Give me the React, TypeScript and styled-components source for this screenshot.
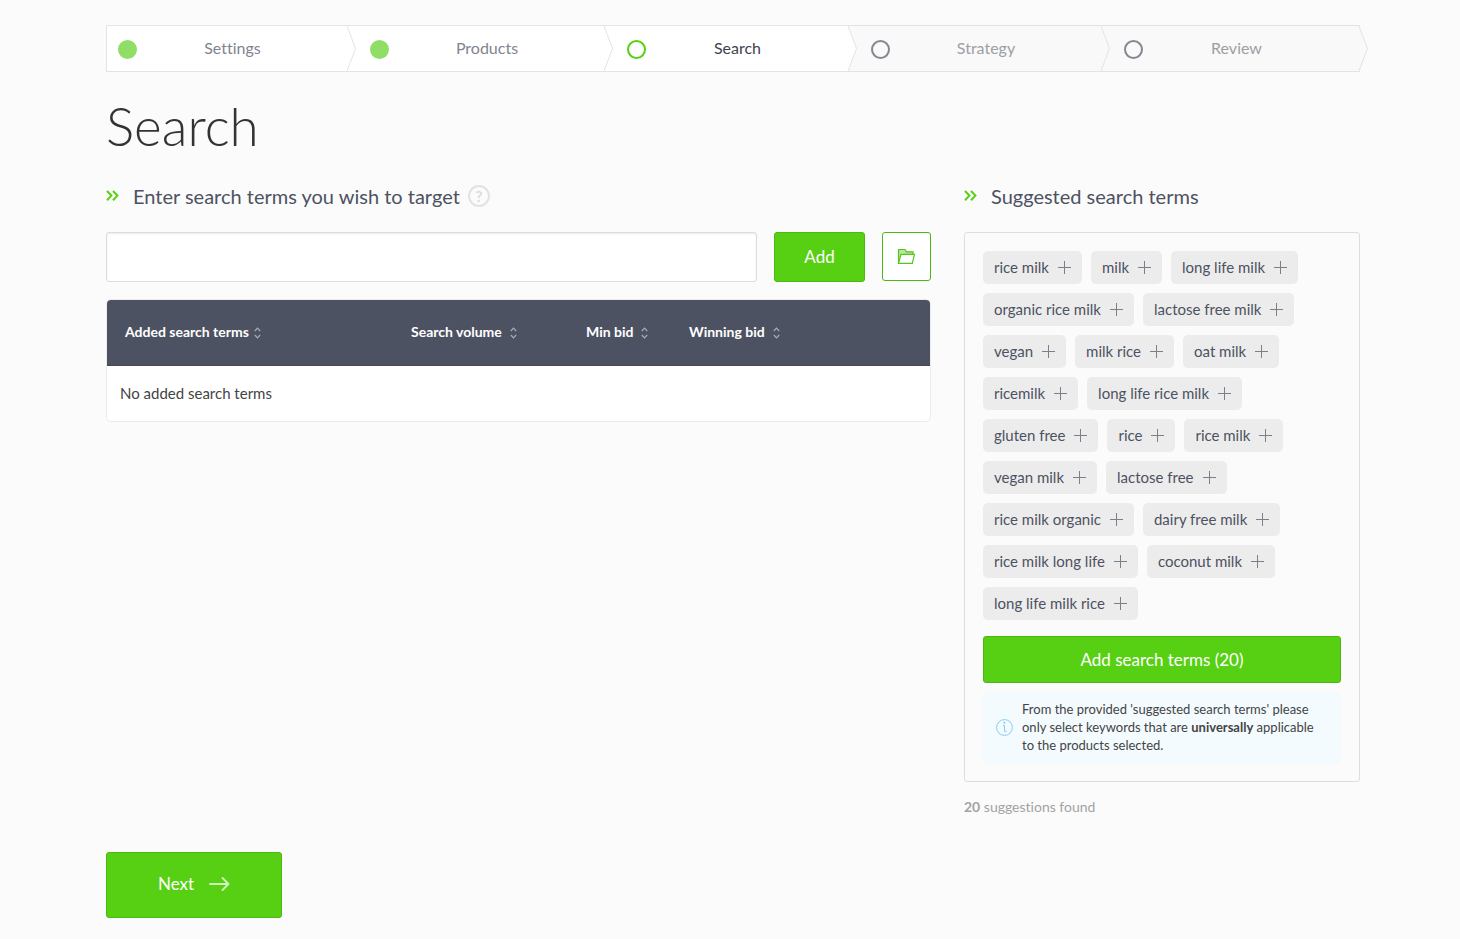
import React from "react";
import styled, { createGlobalStyle } from "styled-components";

const GlobalStyle = createGlobalStyle`
  *, *::before, *::after { box-sizing: border-box; }
  body {
    margin: 0;
    background: #fbfbfb;
    color: #333;
    font-family: Lato, "Liberation Sans", sans-serif;
    font-size: 16px;
    font-variant-ligatures: none;
  }
  button, input { font-family: inherit; font-variant-ligatures: none; }
`;

const Page = styled.main`
  padding: 25px 100px 21px 106px;
`;

/* ---- progress bar ---- */

type StepState = "done" | "current" | "todo";

const stepBackground = (s: StepState) => (s === "todo" ? "#f9f9f9" : "#fff");
const stepColor: Record<StepState, string> = {
  done: "#81848f",
  current: "#3f4350",
  todo: "#9d9fa3",
};
const markColor: Record<StepState, string> = {
  done: "#8fde66",
  current: "#57d013",
  todo: "#858793",
};

const Steps = styled.ol`
  display: grid;
  grid-template-columns: 241fr 257fr 244fr 253fr 258fr;
  margin: 0;
  padding: 0;
  list-style: none;
  border: 1px solid #e3e3e3;
  border-right: 0;
`;

const Step = styled.li<{ $state: StepState }>`
  position: relative;
  display: flex;
  align-items: center;
  height: 45px;
  padding: 0 20px 0 22px;
  background: ${(p) => stepBackground(p.$state)};
  color: ${(p) => stepColor[p.$state]};

  &:first-child { padding-left: 11px; }
  &:last-child { padding-right: 30px; }
`;

const StepMark = styled.span<{ $state: StepState }>`
  flex: none;
  width: 19px;
  height: 19px;
  margin-top: 2px;
  border: 2px solid ${(p) => markColor[p.$state]};
  border-radius: 50%;
  background: ${(p) => (p.$state === "done" ? markColor.done : "transparent")};
`;

const StepLabel = styled.span`
  flex: 1;
  padding-bottom: 2px;
  text-align: center;
  font-size: 16px;
  line-height: 20px;
`;

const StepTip = styled.svg`
  position: absolute;
  z-index: 1;
  top: 0;
  right: -9px;
  width: 10px;
  height: 45px;
`;

/* ---- headings ---- */

const Title = styled.h1`
  margin: 24px 0 28px;
  font-size: 53px;
  font-weight: 300;
  line-height: 60px;
  color: #333;
`;

const SectionHead = styled.div`
  display: flex;
  align-items: center;
  height: 24px;
  margin-bottom: 24px;
`;

const SectionTitle = styled.h2`
  margin: 0 8px 0 14px;
  font-size: 20px;
  font-weight: 400;
  line-height: 24px;
  color: #4d5262;
`;

const HelpButton = styled.button`
  width: 22px;
  height: 22px;
  padding: 0;
  border: 2px solid #e2e2e2;
  border-radius: 50%;
  background: transparent;
  color: #dcdcdc;
  font-size: 15px;
  font-weight: 700;
  line-height: 18px;
`;

const Columns = styled.div`
  display: grid;
  grid-template-columns: minmax(0, 1fr) 396px;
  column-gap: 33px;
  align-items: start;
`;

/* ---- buttons and inputs ---- */

const GreenButton = styled.button`
  display: flex;
  align-items: center;
  justify-content: center;
  padding: 0;
  border: 1px solid #4cb911;
  border-radius: 3px;
  background: #57d013;
  color: #fff;
  font-size: 17px;
  line-height: 24px;
`;

const AddButton = styled(GreenButton)`
  width: 91px;
  height: 50px;
`;

const AddAllButton = styled(GreenButton)`
  width: 100%;
  height: 47px;
`;

const NextButton = styled(GreenButton)`
  gap: 15px;
  width: 176px;
  height: 66px;
  margin-top: 36px;
  padding-bottom: 2px;
`;

const FolderButton = styled.button`
  display: flex;
  align-items: center;
  justify-content: center;
  width: 49px;
  height: 49px;
  padding: 0;
  border: 1px solid #4cb911;
  border-radius: 3px;
  background: #fff;
`;

const EntryForm = styled.form`
  display: flex;
  gap: 17px;
`;

const TermInput = styled.input`
  flex: 1;
  min-width: 0;
  height: 50px;
  padding: 0 14px;
  border: 1px solid #dcdcdc;
  border-radius: 3px;
  background: #fff;
  box-shadow: inset 0 1px 2px rgba(0, 0, 0, 0.08);
  font-size: 16px;
`;

/* ---- table ---- */

const TableFrame = styled.div`
  margin-top: 17px;
  border: 1px solid #ebebeb;
  border-radius: 5px;
  background: #fff;
  overflow: hidden;
`;

const TermTable = styled.table`
  width: 100%;
  table-layout: fixed;
  border-collapse: collapse;
`;

const HeadCell = styled.th<{ $width?: number }>`
  width: ${(p) => (p.$width ? `${p.$width}px` : "auto")};
  height: 66px;
  padding: 0 0 0 18px;
  background: #4d5262;
  box-shadow: inset 0 -1px #434756;
  text-align: left;
`;

const SortButton = styled.button<{ $tight?: boolean }>`
  display: flex;
  align-items: center;
  gap: ${(p) => (p.$tight ? 5 : 8)}px;
  padding: 0;
  border: 0;
  background: none;
  color: #fff;
  font-size: 14px;
  font-weight: 700;
  line-height: 18px;
  white-space: nowrap;
`;

const RaisedText = styled.span`
  padding-bottom: 2px;
`;

const EmptyCell = styled.td`
  height: 55px;
  padding: 0 13px 2px;
  font-size: 15px;
  color: #444;
`;

/* ---- suggestions ---- */

const Card = styled.div`
  padding: 18px 18px 17px;
  border: 1px solid #dedede;
  border-radius: 3px;
`;

const Chips = styled.ul`
  display: flex;
  flex-wrap: wrap;
  gap: 9px;
  margin: 0 0 16px;
  padding: 0;
  list-style: none;
`;

const Chip = styled.button`
  display: flex;
  align-items: center;
  gap: 9px;
  height: 33px;
  padding: 0 11px;
  border: 0;
  border-radius: 5px;
  background: #ececec;
  color: #4d5262;
  font-size: 15px;
  line-height: 20px;
`;

const Notice = styled.div`
  display: flex;
  align-items: center;
  gap: 9px;
  margin-top: 9px;
  padding: 8px 13px 10px;
  background: #f3fbff;
`;

const NoticeText = styled.p`
  margin: 0;
  font-size: 13px;
  line-height: 18px;
  color: #444;
`;

const Found = styled.p`
  margin: 16px 0 0;
  font-size: 14px;
  line-height: 18px;
  color: #a3a3a3;
`;

/* ---- icons ---- */

const DoubleChevron = () => (
  <svg width="13" height="12" viewBox="0 0 13 12" fill="none" stroke="#57d013" strokeWidth="2" aria-hidden="true">
    <path d="M1 1l4.4 4.6L1 10.200M7 1l4.400 4.600L7 10.200" />
  </svg>
);

const SortIcon = () => (
  <svg width="7" height="12" viewBox="0 0 7 12" fill="none" stroke="#a9acb5" strokeWidth="1.200" aria-hidden="true">
    <path d="M.8 4L3.500 1.200L6.200 4M.8 8L3.500 10.800L6.200 8" />
  </svg>
);

const PlusIcon = () => (
  <svg width="13" height="13" viewBox="0 0 13 13" stroke="#7b7f8a" aria-hidden="true">
    <path d="M6.500 0v13M0 6.500h13" />
  </svg>
);

const FolderIcon = () => (
  <svg width="19" height="17" viewBox="0 0 19 17" fill="none" stroke="#55c41c" strokeWidth="1.200" aria-hidden="true">
    <path d="M1.500 15V1.500h6.500l1.500 2.300h6.500v2.500" fill="#b4e89a" />
    <path d="M1.500 15.300L4 6.300h13.500l-2.200 9z" fill="#fff" />
  </svg>
);

const InfoIcon = () => (
  <svg width="17" height="17" viewBox="0 0 17 17" fill="none" stroke="#86cdec" aria-hidden="true">
    <circle cx="8.500" cy="8.500" r="7.900" />
    <path d="M7 6.500h1.500v5.900M8.500 12.400h2" />
    <circle cx="8.300" cy="3.800" r=".6" fill="#86cdec" />
  </svg>
);

const ArrowIcon = () => (
  <svg width="21" height="14" viewBox="0 0 21 14" fill="none" stroke="#d2f5bf" strokeWidth="1.800" strokeLinecap="round" strokeLinejoin="round" aria-hidden="true">
    <path d="M1 7h18.500M13.500 1l6 6l-6 6" />
  </svg>
);

const steps: { label: string; state: StepState }[] = [
  { label: "Settings", state: "done" },
  { label: "Products", state: "done" },
  { label: "Search", state: "current" },
  { label: "Strategy", state: "todo" },
  { label: "Review", state: "todo" },
];

const columns = [
  { label: "Added search terms", width: 286, tight: true },
  { label: "Search volume", width: 175 },
  { label: "Min bid", width: 103 },
  { label: "Winning bid" },
];

const suggestions = [
  "rice milk", "milk", "long life milk", "organic rice milk", "lactose free milk",
  "vegan", "milk rice", "oat milk", "ricemilk", "long life rice milk",
  "gluten free", "rice", "rice milk", "vegan milk", "lactose free",
  "rice milk organic", "dairy free milk", "rice milk long life", "coconut milk",
  "long life milk rice",
];

export default function App() {
  return (
    <Page>
      <GlobalStyle />
      <nav aria-label="Progress">
        <Steps>
          {steps.map((s) => (
            <Step key={s.label} $state={s.state} aria-current={s.state === "current" ? "step" : undefined}>
              <StepMark $state={s.state} />
              <StepLabel>{s.label}</StepLabel>
              <StepTip viewBox="0 0 10 45" aria-hidden="true">
                <path d="M-1 0H0L8.500 22.500L0 45H-1z" fill={stepBackground(s.state)} />
                <path d="M0 0L8.500 22.500L0 45" fill="none" stroke="#e3e3e3" />
              </StepTip>
            </Step>
          ))}
        </Steps>
      </nav>

      <Title>Search</Title>

      <Columns>
        <section>
          <SectionHead>
            <DoubleChevron />
            <SectionTitle id="entry-title">Enter search terms you wish to target</SectionTitle>
            <HelpButton type="button" aria-label="Help">?</HelpButton>
          </SectionHead>
          <EntryForm onSubmit={(e) => e.preventDefault()}>
            <TermInput type="text" aria-labelledby="entry-title" />
            <AddButton type="submit">Add</AddButton>
            <FolderButton type="button" aria-label="Upload search terms">
              <FolderIcon />
            </FolderButton>
          </EntryForm>
          <TableFrame>
            <TermTable>
              <thead>
                <tr>
                  {columns.map((c) => (
                    <HeadCell key={c.label} $width={c.width} scope="col">
                      <SortButton type="button" $tight={c.tight}>
                        <RaisedText>{c.label}</RaisedText>
                        <SortIcon />
                      </SortButton>
                    </HeadCell>
                  ))}
                </tr>
              </thead>
              <tbody>
                <tr>
                  <EmptyCell colSpan={4}>No added search terms</EmptyCell>
                </tr>
              </tbody>
            </TermTable>
          </TableFrame>
        </section>

        <section>
          <SectionHead>
            <DoubleChevron />
            <SectionTitle>Suggested search terms</SectionTitle>
          </SectionHead>
          <Card>
            <Chips>
              {suggestions.map((term, i) => (
                <li key={i}>
                  <Chip type="button">
                    <RaisedText>{term}</RaisedText>
                    <PlusIcon />
                  </Chip>
                </li>
              ))}
            </Chips>
            <AddAllButton type="button">Add search terms (20)</AddAllButton>
            <Notice>
              <InfoIcon />
              <NoticeText>
                From the provided 'suggested search terms' please
                <br />
                only select keywords that are <b>universally</b> applicable
                <br />
                to the products selected.
              </NoticeText>
            </Notice>
          </Card>
          <Found>
            <b>20</b> suggestions found
          </Found>
        </section>
      </Columns>

      <NextButton type="button">
        Next
        <ArrowIcon />
      </NextButton>
    </Page>
  );
}
